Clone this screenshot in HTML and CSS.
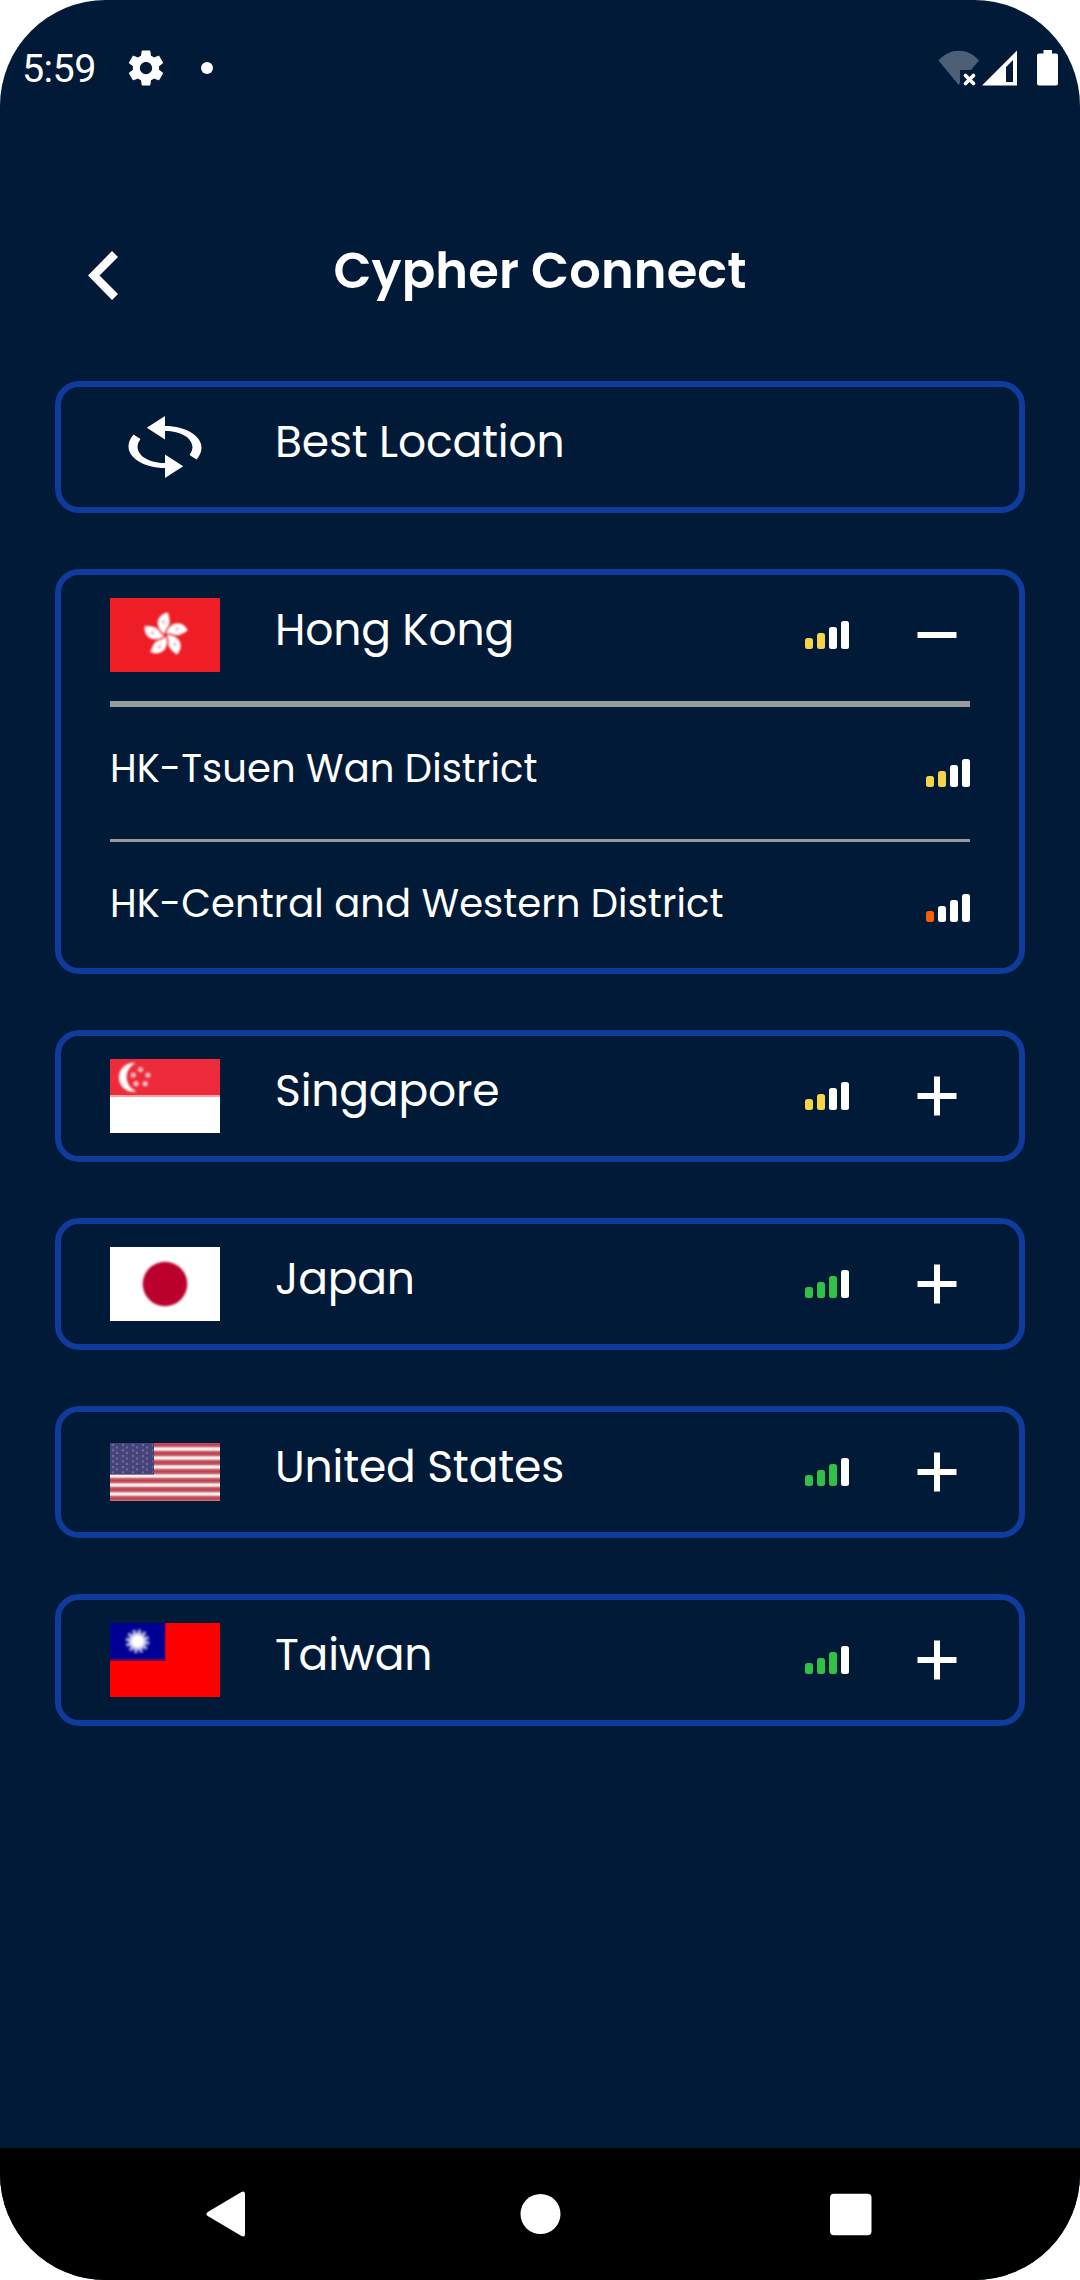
FILE: index.html
```html
<!DOCTYPE html>
<html lang="en">
<head>
<meta charset="utf-8">
<title>Cypher Connect</title>
<link rel="stylesheet" href="styles.css">
</head>
<body>
<div class="screen">
  <header class="status">
    <span class="time">5:59</span>
    <svg class="gear" viewBox="0 0 24 24"><path d="M19.43 12.98c.04-.32.07-.64.07-.98s-.03-.66-.07-.98l2.11-1.65c.19-.15.24-.42.12-.64l-2-3.46c-.12-.22-.39-.3-.61-.22l-2.49 1c-.52-.4-1.08-.73-1.69-.98l-.38-2.65A.488.488 0 0 0 14 2h-4c-.25 0-.46.18-.49.42l-.38 2.65c-.61.25-1.17.59-1.69.98l-2.49-1c-.23-.09-.49 0-.61.22l-2 3.46c-.13.22-.07.49.12.64l2.11 1.65c-.04.32-.07.65-.07.98s.03.66.07.98l-2.11 1.65c-.19.15-.24.42-.12.64l2 3.46c.12.22.39.3.61.22l2.49-1c.52.4 1.08.73 1.69.98l.38 2.65c.03.24.24.42.49.42h4c.25 0 .46-.18.49-.42l.38-2.65c.61-.25 1.17-.59 1.69-.98l2.49 1c.23.09.49 0 .61-.22l2-3.46c.12-.22.07-.49-.12-.64l-2.11-1.65zM12 15.5c-1.93 0-3.5-1.57-3.5-3.5s1.57-3.5 3.5-3.5 3.500 1.570 3.500 3.500-1.570 3.500-3.500 3.500z"/></svg>
    <span class="dot"></span>
    <svg class="sys" viewBox="0 0 122 38">
      <path class="faint" d="M.5 11.500C12-1.500 30-1.500 41 11.500L33 21H22V33.500L20.700 36Z"/>
      <path class="cross" d="M27.500 26.500l8 8m0-8l-8 8"/>
      <path fill-rule="evenodd" d="M44 36.500L79 1.500V36.500ZM68 18V33H75V11Z"/>
      <path d="M105.500 1h8.500v3.500h4a2 2 0 0 1 2 2V34.500a2 2 0 0 1-2 2H101a2 2 0 0 1-2-2V6.500a2 2 0 0 1 2-2h4.500Z"/>
    </svg>
  </header>

  <div class="titlebar">
    <svg class="back" viewBox="0 0 30 49"><path d="M0 24.500L24 0 30 6 11.500 24.500 30 43 24 49Z"/></svg>
    <h1>Cypher Connect</h1>
  </div>

  <main class="list">
    <section class="card">
      <div class="row">
        <svg class="flag" viewBox="0 0 110 74"><g id="half" fill="#fff"><path d="M36.800 17.700L55 6V16C76 16 91.500 26 91.500 37.500Q91.500 43.500 86.500 49.500L79.500 45Q82.500 41 82.500 37.500C82.500 28 71 21 55 21V29.500Z"/></g><use href="#half" transform="rotate(180 55 37)"/></svg>
        <span class="label">Best Location</span>
      </div>
    </section>

    <section class="card">
      <div class="row">
        <svg class="flag" viewBox="0 0 110 74">
          <rect width="110" height="74" fill="#ef1d25"/>
          <g class="soft">
            <g id="petal"><path d="M58 14.500C51 15 45.500 22 48.500 29Q50.500 34 54.500 36 55 32 57.500 29.500C61.500 25 59 20 58 14.500Z" fill="#fff"/><circle cx="53.500" cy="24" r="1.300" fill="#f58b90"/></g>
            <use href="#petal" transform="rotate(72 55.500 37)"/>
            <use href="#petal" transform="rotate(144 55.500 37)"/>
            <use href="#petal" transform="rotate(216 55.500 37)"/>
            <use href="#petal" transform="rotate(288 55.500 37)"/>
          </g>
        </svg>
        <span class="label">Hong Kong</span>
        <span class="signal fair"><i></i><i></i><i></i><i></i></span>
        <svg class="toggle" viewBox="0 0 66 66"><path d="M13.500 33h39"/></svg>
      </div>
      <div class="server first">
        <span>HK-Tsuen Wan District</span>
        <span class="signal fair"><i></i><i></i><i></i><i></i></span>
      </div>
      <div class="server">
        <span>HK-Central and Western District</span>
        <span class="signal poor"><i></i><i></i><i></i><i></i></span>
      </div>
    </section>

    <section class="card">
      <div class="row">
        <svg class="flag" viewBox="0 0 110 74">
          <rect width="110" height="74" fill="#fff"/>
          <rect width="110" height="36.500" fill="#ee2b3a"/>
          <rect y="36" width="110" height="2" fill="#f7a0a6"/>
          <g class="soft">
            <path d="M25.500 4A14.500 14.500 0 1 0 26.500 32.500A15.500 15.500 0 0 1 25.500 4Z" fill="#fff"/>
            <g fill="#fbc3c7"><circle cx="30.500" cy="10.500" r="2.600"/><circle cx="23.300" cy="16" r="2.600"/><circle cx="38" cy="16" r="2.600"/><circle cx="26" cy="24.700" r="2.600"/><circle cx="35.200" cy="24.700" r="2.600"/></g>
          </g>
        </svg>
        <span class="label">Singapore</span>
        <span class="signal fair"><i></i><i></i><i></i><i></i></span>
        <svg class="toggle" viewBox="0 0 66 66"><path d="M13.500 33h39M33 13.500v39"/></svg>
      </div>
    </section>

    <section class="card">
      <div class="row">
        <svg class="flag" viewBox="0 0 110 74">
          <rect width="110" height="74" fill="#fff"/>
          <circle class="soft" cx="55" cy="37" r="22.300" fill="#bc002d"/>
        </svg>
        <span class="label">Japan</span>
        <span class="signal good"><i></i><i></i><i></i><i></i></span>
        <svg class="toggle" viewBox="0 0 66 66"><path d="M13.500 33h39M33 13.500v39"/></svg>
      </div>
    </section>

    <section class="card">
      <div class="row">
        <svg class="flag flat" viewBox="0 0 110 58">
          <defs>
            <linearGradient id="stripes" gradientUnits="userSpaceOnUse" x1="0" y1="1.500" x2="0" y2="10.500" spreadMethod="repeat">
              <stop offset="0" stop-color="#c04050"/><stop offset=".2" stop-color="#c85f6b"/><stop offset=".36" stop-color="#eccdd1"/><stop offset=".5" stop-color="#fff"/><stop offset=".64" stop-color="#eccdd1"/><stop offset=".8" stop-color="#c85f6b"/><stop offset="1" stop-color="#c04050"/>
            </linearGradient>
            <pattern id="stars" width="10" height="5.500" patternUnits="userSpaceOnUse"><g fill="#6f6c9a"><circle cx="3" cy="2" r="1.200"/><circle cx="7" cy="4.500" r="1.200"/></g></pattern>
          </defs>
          <rect width="110" height="58" fill="url(#stripes)"/>
          <rect width="44" height="31.500" fill="#46427a"/>
          <rect x="1" y="1" width="42" height="29.500" fill="url(#stars)"/>
        </svg>
        <span class="label">United States</span>
        <span class="signal good"><i></i><i></i><i></i><i></i></span>
        <svg class="toggle" viewBox="0 0 66 66"><path d="M13.500 33h39M33 13.500v39"/></svg>
      </div>
    </section>

    <section class="card">
      <div class="row">
        <svg class="flag" viewBox="0 0 110 74">
          <rect width="110" height="74" fill="#f00"/>
          <rect width="55.500" height="38" fill="#6b0050"/>
          <rect width="54.500" height="36" fill="#000095"/>
          <g class="soft">
            <circle cx="27.500" cy="18.300" r="9.500" fill="none" stroke="#a5a5dd" stroke-width="5" stroke-dasharray="2.900 2.074"/>
            <circle cx="27.500" cy="18.300" r="9" fill="#c4c4ec"/>
            <circle cx="27.500" cy="18.300" r="6.200" fill="#fff"/>
          </g>
        </svg>
        <span class="label">Taiwan</span>
        <span class="signal good"><i></i><i></i><i></i><i></i></span>
        <svg class="toggle" viewBox="0 0 66 66"><path d="M13.500 33h39M33 13.500v39"/></svg>
      </div>
    </section>
  </main>

  <nav class="nav">
    <svg viewBox="0 0 46 46"><path d="M38 1.200Q42 -1 42 3V43Q42 47 38 44.800L5.200 25.300Q1.500 23 5.200 20.700Z"/></svg>
    <svg viewBox="0 0 46 46"><circle cx="24.500" cy="23" r="20"/></svg>
    <svg viewBox="0 0 46 46"><rect x="2" y="2.700" width="41.500" height="41.500" rx="4"/></svg>
  </nav>
</div>
</body>
</html>
```

FILE: styles.css
```css
* { box-sizing: border-box; }

body {
  margin: 0;
  background: #fff;
  color: #fff;
  font-family: Poppins, Inter, sans-serif;
  font-feature-settings: "cv11";
}

svg { display: block; fill: #fff; }

.screen {
  display: flex;
  flex-direction: column;
  width: 1080px;
  height: 2280px;
  border-radius: 106px;
  overflow: hidden;
  background: #001a38;
}

/* System status bar */
.status {
  display: flex;
  align-items: center;
  height: 135px;
  padding: 0 20px 0 22px;
}
.time {
  width: 103px;
  padding-top: 3px;
  font: 400 39.500px/46px Roboto, sans-serif;
  letter-spacing: -.6px;
}
.gear { width: 42px; height: 42px; }
.dot {
  width: 12px;
  height: 12px;
  margin-left: 34px;
  border-radius: 50%;
  background: #fff;
}
.sys { width: 122px; height: 38px; margin-left: auto; }
.sys .faint { fill: #4d5f76; }
.sys .cross { stroke: #fff; stroke-width: 3.600; stroke-linecap: round; }

/* App header */
.titlebar {
  display: grid;
  grid-template-columns: 30px 1fr 30px;
  align-items: center;
  height: 246px;
  padding: 0 88px;
}
.back { width: 30px; height: 49px; margin-top: 35px; }
h1 {
  margin: 0;
  padding-top: 25px;
  text-align: center;
  font-size: 49.500px;
  font-weight: 600;
  line-height: 74px;
  letter-spacing: .15px;
}

/* Location list */
.list {
  display: flex;
  flex-direction: column;
  gap: 56px;
  flex: 1;
  padding: 0 55px;
}
.card {
  padding: 0 49px;
  border: 6px solid #0f3b9c;
  border-radius: 24px;
}
.row {
  display: flex;
  align-items: center;
  height: 120px;
}
.flag { width: 110px; height: 74px; }
.flag.flat { height: 58px; }
.soft { filter: blur(.9px); }
.label {
  flex: 1;
  margin-left: 55px;
  padding-bottom: 11px;
  font-size: 44px;
  line-height: 66px;
  letter-spacing: -.18px;
}
.toggle {
  width: 66px;
  height: 66px;
  margin-left: 55px;
  stroke: #fff;
  stroke-width: 6;
}

.signal { display: flex; align-items: flex-end; gap: 4px; height: 28px; }
.signal i { width: 8px; height: 28px; border-radius: 2.500px; background: #fff; }
.signal i:nth-child(1) { height: 10.700px; }
.signal i:nth-child(2) { height: 16px; }
.signal i:nth-child(3) { height: 22px; }
.fair i:nth-child(-n+2) { background: #f5d547; }
.poor i:nth-child(1) { background: #fb5f05; }
.good i:nth-child(-n+3) { background: #30c146; }

.server {
  display: flex;
  justify-content: space-between;
  align-items: center;
  height: 129px;
  padding-top: 6px;
  border-top: 3px solid #999;
  font-size: 38.500px;
  letter-spacing: .08px;
}
.server.first {
  height: 138px;
  margin-top: 6px;
  padding-top: 0;
  border-top-width: 6px;
}
.server > span:first-child { line-height: 58px; padding-bottom: 9px; }

/* System navigation */
.nav {
  display: flex;
  justify-content: space-between;
  align-items: center;
  height: 132px;
  padding: 0 206px 0 203px;
  background: #000;
}
.nav svg { width: 46px; height: 46px; }
```
